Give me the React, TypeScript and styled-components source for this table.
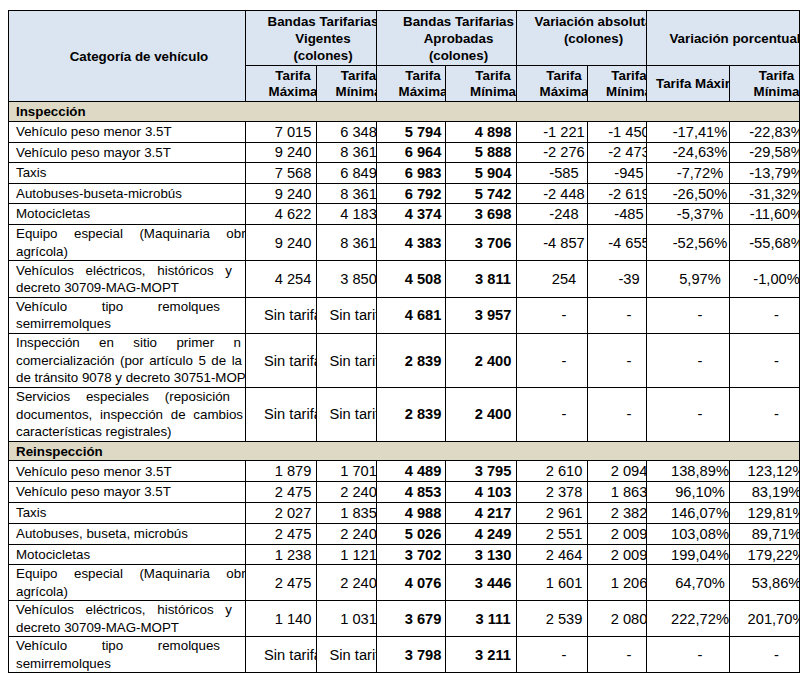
import React from 'react';
import styled, { createGlobalStyle } from 'styled-components';

const Global = createGlobalStyle`
  html, body { padding: 0; background: #ffffff; }
  body {
    margin: 10px 8px 8px 8px;
    font-family: "Liberation Sans", Arial, sans-serif;
    font-size: 13.33px;
    color: #000000;
  }
`;

const Table = styled.div<{ $rows: string }>`
  display: grid;
  grid-template-columns: 237px 71px 60px 69px 71px 71px 59px 83px 70px;
  grid-template-rows: ${(p) => p.$rows};
  width: 792px;
  box-sizing: border-box;
  border-left: 1px solid #000;
  border-top: 1px solid #000;
`;

const Cell = styled.div`
  box-sizing: border-box;
  border-right: 1px solid #000;
  border-bottom: 1px solid #000;
  overflow: hidden;
  white-space: nowrap;
  min-width: 0;
  min-height: 0;
`;

const HeadCell = styled(Cell)<{ $col: string; $row: string; $lh?: number }>`
  grid-column: ${(p) => p.$col};
  grid-row: ${(p) => p.$row};
  background: #dbe5f1;
  font-weight: bold;
  display: flex;
  flex-direction: column;
  align-items: center;
  justify-content: center;
  padding-left: 24px;
  line-height: ${(p) => p.$lh ?? 17}px;
`;

const Band = styled(Cell)`
  grid-column: 1 / -1;
  background: #ddd9c4;
  font-weight: bold;
  display: flex;
  align-items: center;
  padding-left: 7px;
`;

const LabelCell = styled(Cell)`
  display: flex;
  flex-direction: column;
  justify-content: center;
  align-items: flex-start;
  padding-left: 7px;
  line-height: 17.5px;
`;

const JustLine = styled.div<{ $w: number }>`
  display: flex;
  justify-content: space-between;
  width: ${(p) => p.$w}px;
  flex-shrink: 0;
`;

const PlainLine = styled.div`
  flex-shrink: 0;
`;

const ValueCell = styled(Cell)<{ $bold?: boolean }>`
  display: flex;
  align-items: center;
  justify-content: center;
  padding-left: 24px;
  font-size: 14.67px;
  font-weight: ${(p) => (p.$bold ? 'bold' : 'normal')};
`;

type Line = string | { words: string[]; w: number };
type Row = { label: Line[]; v: string[] };

const equipo: Line[] = [
  { words: ['Equipo', 'especial', '(Maquinaria', 'obra'], w: 237 },
  'agrícola)',
];
const electricos: Line[] = [
  { words: ['Vehículos', 'eléctricos,', 'históricos', 'y'], w: 216 },
  'decreto 30709-MAG-MOPT',
];
const remolques: Line[] = [
  { words: ['Vehículo', 'tipo', 'remolques'], w: 204 },
  'semirremolques',
];

const NONE = ['-', '-', '-', '-'];
const SIN = ['Sin tarifa', 'Sin tarifa'];

const inspeccion: Row[] = [
  { label: ['Vehículo peso menor 3.5T'], v: ['7 015', '6 348', '5 794', '4 898', '-1 221', '-1 450', '-17,41%', '-22,83%'] },
  { label: ['Vehículo peso mayor 3.5T'], v: ['9 240', '8 361', '6 964', '5 888', '-2 276', '-2 473', '-24,63%', '-29,58%'] },
  { label: ['Taxis'], v: ['7 568', '6 849', '6 983', '5 904', '-585', '-945', '-7,72%', '-13,79%'] },
  { label: ['Autobuses-buseta-microbús'], v: ['9 240', '8 361', '6 792', '5 742', '-2 448', '-2 619', '-26,50%', '-31,32%'] },
  { label: ['Motocicletas'], v: ['4 622', '4 183', '4 374', '3 698', '-248', '-485', '-5,37%', '-11,60%'] },
  { label: equipo, v: ['9 240', '8 361', '4 383', '3 706', '-4 857', '-4 655', '-52,56%', '-55,68%'] },
  { label: electricos, v: ['4 254', '3 850', '4 508', '3 811', '254', '-39', '5,97%', '-1,00%'] },
  { label: remolques, v: [...SIN, '4 681', '3 957', ...NONE] },
  {
    label: [
      { words: ['Inspección', 'en', 'sitio', 'primer', 'n'], w: 225 },
      { words: ['comercialización', '(por', 'artículo', '5', 'de', 'la'], w: 226 },
      'de tránsito 9078 y decreto 30751-MOPT',
    ],
    v: [...SIN, '2 839', '2 400', ...NONE],
  },
  {
    label: [
      { words: ['Servicios', 'especiales', '(reposición'], w: 214 },
      { words: ['documentos,', 'inspección', 'de', 'cambios'], w: 227 },
      'características registrales)',
    ],
    v: [...SIN, '2 839', '2 400', ...NONE],
  },
];

const reinspeccion: Row[] = [
  { label: ['Vehículo peso menor 3.5T'], v: ['1 879', '1 701', '4 489', '3 795', '2 610', '2 094', '138,89%', '123,12%'] },
  { label: ['Vehículo peso mayor 3.5T'], v: ['2 475', '2 240', '4 853', '4 103', '2 378', '1 863', '96,10%', '83,19%'] },
  { label: ['Taxis'], v: ['2 027', '1 835', '4 988', '4 217', '2 961', '2 382', '146,07%', '129,81%'] },
  { label: ['Autobuses, buseta, microbús'], v: ['2 475', '2 240', '5 026', '4 249', '2 551', '2 009', '103,08%', '89,71%'] },
  { label: ['Motocicletas'], v: ['1 238', '1 121', '3 702', '3 130', '2 464', '2 009', '199,04%', '179,22%'] },
  { label: equipo, v: ['2 475', '2 240', '4 076', '3 446', '1 601', '1 206', '64,70%', '53,86%'] },
  { label: electricos, v: ['1 140', '1 031', '3 679', '3 111', '2 539', '2 080', '222,72%', '201,70%'] },
  { label: remolques, v: [...SIN, '3 798', '3 211', ...NONE] },
];

const heightFor = (lines: number, single: number, double: number) =>
  lines === 1 ? single : lines === 2 ? double : 53.9;

const rowHeights: number[] = [
  55,
  36,
  20,
  ...inspeccion.map((r) => heightFor(r.label.length, 20.6, 36.4)),
  19.5,
  ...reinspeccion.map((r) => heightFor(r.label.length, 20.8, 36)),
];

const Label: React.FC<{ lines: Line[] }> = ({ lines }) => (
  <LabelCell>
    {lines.map((l, i) =>
      typeof l === 'string' ? (
        <PlainLine key={i}>{l}</PlainLine>
      ) : (
        <JustLine key={i} $w={l.w}>
          {l.words.map((w, j) => (
            <span key={j}>{w}</span>
          ))}
        </JustLine>
      )
    )}
  </LabelCell>
);

const DataRow: React.FC<{ row: Row }> = ({ row }) => (
  <>
    <Label lines={row.label} />
    {row.v.map((val, i) => (
      <ValueCell key={i} $bold={i === 2 || i === 3}>
        {val}
      </ValueCell>
    ))}
  </>
);

const subHeads: { lines: string[]; col: number }[] = [
  { lines: ['Tarifa', 'Máxima'], col: 2 },
  { lines: ['Tarifa', 'Mínima'], col: 3 },
  { lines: ['Tarifa', 'Máxima'], col: 4 },
  { lines: ['Tarifa', 'Mínima'], col: 5 },
  { lines: ['Tarifa', 'Máxima'], col: 6 },
  { lines: ['Tarifa', 'Mínima'], col: 7 },
  { lines: ['Tarifa Máxima'], col: 8 },
  { lines: ['Tarifa', 'Mínima'], col: 9 },
];

const groupHeads: { lines: string[]; col: string }[] = [
  { lines: ['Bandas Tarifarias', 'Vigentes', '(colones)'], col: '2 / 4' },
  { lines: ['Bandas Tarifarias', 'Aprobadas', '(colones)'], col: '4 / 6' },
  { lines: ['Variación absoluta', '(colones)', '\u00a0'], col: '6 / 8' },
  { lines: ['Variación porcentual'], col: '8 / 10' },
];

export default function App() {
  return (
    <>
      <Global />
      <Table $rows={rowHeights.map((h) => `${h}px`).join(' ')}>
        <HeadCell $col="1 / 2" $row="1 / 3">
          <span>Categoría de vehículo</span>
        </HeadCell>
        {groupHeads.map((g) => (
          <HeadCell key={g.col} $col={g.col} $row="1 / 2">
            {g.lines.map((l, i) => (
              <span key={i}>{l}</span>
            ))}
          </HeadCell>
        ))}
        {subHeads.map((s) => (
          <HeadCell key={s.col} $col={`${s.col} / ${s.col + 1}`} $row="2 / 3" $lh={16}>
            {s.lines.map((l) => (
              <span key={l}>{l}</span>
            ))}
          </HeadCell>
        ))}
        <Band>Inspección</Band>
        {inspeccion.map((r, i) => (
          <DataRow key={`i${i}`} row={r} />
        ))}
        <Band>Reinspección</Band>
        {reinspeccion.map((r, i) => (
          <DataRow key={`r${i}`} row={r} />
        ))}
      </Table>
    </>
  );
}
